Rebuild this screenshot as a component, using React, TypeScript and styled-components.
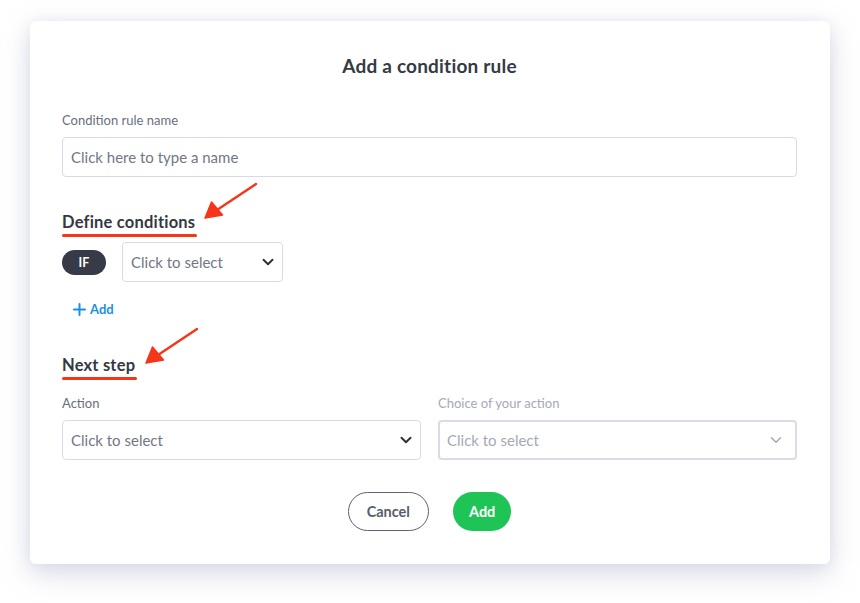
import styled, { createGlobalStyle } from 'styled-components';

const GlobalStyle = createGlobalStyle`
  html, body {
    margin: 0;
    padding: 0;
    background: #ffffff;
  }
  body {
    font-family: Lato, "Open Sans", "Liberation Sans", sans-serif;
    color: #343841;
  }
  * {
    box-sizing: border-box;
  }
`;

function Chevron({ muted }: { muted?: boolean }) {
    return (
        <ChevronSvg width="14" height="14" viewBox="0 0 14 14" fill="none">
            <path
                d="M2.5 4.8L7 9.3L11.5 4.8"
                stroke={muted ? '#a3a8b6' : '#2f333b'}
                strokeWidth={muted ? 1.5 : 2}
                strokeLinecap="round"
                strokeLinejoin="round"
            />
        </ChevronSvg>
    );
}

function Arrow() {
    return (
        <svg width="56" height="40" viewBox="0 0 56 40" fill="none">
            <path d="M53 2L14 28" stroke="#f5361a" strokeWidth="2.4" strokeLinecap="round"/>
            <path d="M2 36L8.5 20L19.5 33Z" fill="#f5361a" stroke="#f5361a" strokeWidth="1.5" strokeLinejoin="round"/>
        </svg>
    );
}

export default function App() {
    return (
        <>
            <GlobalStyle/>
            <Page>
                <Card>
                    <Title>Add a condition rule</Title>

                    <Field>
                        <Label>Condition rule name</Label>
                        <TextInput placeholder="Click here to type a name"/>
                    </Field>

                    <Section $top="35px" $gap="5px">
                        <HeadingRow>
                            <Heading>Define conditions</Heading>
                            <ArrowWrap $left={141} $top={-30}>
                                <Arrow/>
                            </ArrowWrap>
                        </HeadingRow>
                        <ConditionRow>
                            <IfPill>IF</IfPill>
                            <Select $width="161px">
                                <span>Click to select</span>
                                <Chevron/>
                            </Select>
                        </ConditionRow>
                        <AddLink>
                            <svg width="13" height="13" viewBox="0 0 13 13" fill="none">
                                <path d="M6.5 1V12M1 6.5H12" stroke="#1b8fe8" strokeWidth="2" strokeLinecap="round"/>
                            </svg>
                            Add
                        </AddLink>
                    </Section>

                    <Section $gap="15px" $top="38px">
                        <HeadingRow>
                            <Heading>Next step</Heading>
                            <ArrowWrap $left={82} $top={-28}>
                                <Arrow/>
                            </ArrowWrap>
                        </HeadingRow>
                        <TwoCols>
                            <Field>
                                <Label>Action</Label>
                                <Select>
                                    <span>Click to select</span>
                                    <Chevron/>
                                </Select>
                            </Field>
                            <Field>
                                <Label $muted>Choice of your action</Label>
                                <Select $disabled>
                                    <span>Click to select</span>
                                    <Chevron muted/>
                                </Select>
                            </Field>
                        </TwoCols>
                    </Section>

                    <Actions>
                        <GhostButton>Cancel</GhostButton>
                        <PrimaryButton>Add</PrimaryButton>
                    </Actions>
                </Card>
            </Page>
        </>
    );
}

const Page = styled.div`
    padding: 21px 30px 40px 30px;
`;

const Card = styled.div`
    width: 800px;
    background: #ffffff;
    border-radius: 6px;
    box-shadow: 0 10px 28px rgba(150, 155, 190, 0.35), 0 0 14px rgba(170, 175, 200, 0.18);
    padding: 33px 33px 33px 32px;
    display: flex;
    flex-direction: column;
`;

const Title = styled.h1`
    margin: 0 0 34px 0;
    text-align: center;
    font-size: 19px;
    line-height: 24px;
    font-weight: 700;
    letter-spacing: 0.2px;
    color: #363a43;
`;

const Field = styled.div`
    display: flex;
    flex-direction: column;
    gap: 8px;
`;

const Label = styled.label<{ $muted?: boolean }>`
    font-size: 13px;
    line-height: 17px;
    color: ${p => p.$muted ? '#a5a9b6' : '#6a6f7c'};
`;

const TextInput = styled.input`
    height: 40px;
    width: 100%;
    border: 1px solid #d8dbe4;
    border-radius: 4px;
    padding: 0 8px;
    font-family: inherit;
    font-size: 15px;
    color: #343841;
    outline: none;

    &::placeholder {
        color: #727785;
    }
`;

const Section = styled.div<{ $gap?: string; $top?: string }>`
    display: flex;
    flex-direction: column;
    align-items: flex-start;
    margin-top: ${p => p.$top || '33px'};
    gap: ${p => p.$gap || '6px'};
`;

const HeadingRow = styled.div`
    position: relative;
`;

const Heading = styled.h2`
    position: relative;
    margin: 0;
    font-size: 16.5px;
    line-height: 20px;
    font-weight: 700;
    letter-spacing: 0.2px;
    color: #343841;
    padding-bottom: 5px;
    padding-right: 2px;

    &::after {
        content: '';
        position: absolute;
        left: 0;
        right: 0;
        bottom: 0;
        height: 3px;
        border-radius: 2px;
        background: #f5361a;
    }
`;

const ArrowWrap = styled.div<{ $left: number; $top: number }>`
    position: absolute;
    left: ${p => p.$left}px;
    top: ${p => p.$top}px;
    line-height: 0;
`;

const ConditionRow = styled.div`
    display: flex;
    align-items: center;
    gap: 16px;
`;

const IfPill = styled.div`
    width: 44px;
    height: 25px;
    border-radius: 13px;
    background: #373b48;
    color: #ffffff;
    font-size: 12.5px;
    font-weight: 700;
    display: flex;
    align-items: center;
    justify-content: center;
`;

const Select = styled.div<{ $width?: string; $disabled?: boolean }>`
    width: ${p => p.$width || '100%'};
    height: 40px;
    border: ${p => p.$disabled ? '2px solid #d9dce6' : '1px solid #d8dbe4'};
    border-radius: 4px;
    padding: ${p => p.$disabled ? '0 12px 0 7px' : '0 7px 0 8px'};
    display: flex;
    align-items: center;
    justify-content: space-between;
    font-size: 15px;
    color: ${p => p.$disabled ? '#a5a9b6' : '#727785'};
`;

const ChevronSvg = styled.svg`
    flex-shrink: 0;
`;

const AddLink = styled.button`
    margin-top: 14px;
    margin-left: 11px;
    border: none;
    background: transparent;
    padding: 0;
    display: flex;
    align-items: center;
    gap: 4px;
    font-family: inherit;
    font-size: 13px;
    font-weight: 700;
    color: #1b8fe8;
    cursor: pointer;
`;

const TwoCols = styled.div`
    width: 100%;
    display: grid;
    grid-template-columns: 1fr 1fr;
    gap: 17px;
`;

const Actions = styled.div`
    margin-top: 32px;
    display: flex;
    justify-content: center;
    gap: 24px;
`;

const GhostButton = styled.button`
    height: 39px;
    padding: 0 18px;
    border-radius: 20px;
    border: 1px solid #5d6272;
    background: #ffffff;
    font-family: inherit;
    font-size: 14.5px;
    font-weight: 700;
    color: #585d6c;
    cursor: pointer;
`;

const PrimaryButton = styled.button`
    height: 39px;
    padding: 0 16px;
    border-radius: 20px;
    border: none;
    background: #1fc457;
    font-family: inherit;
    font-size: 14.5px;
    font-weight: 700;
    color: #ffffff;
    cursor: pointer;
`;
